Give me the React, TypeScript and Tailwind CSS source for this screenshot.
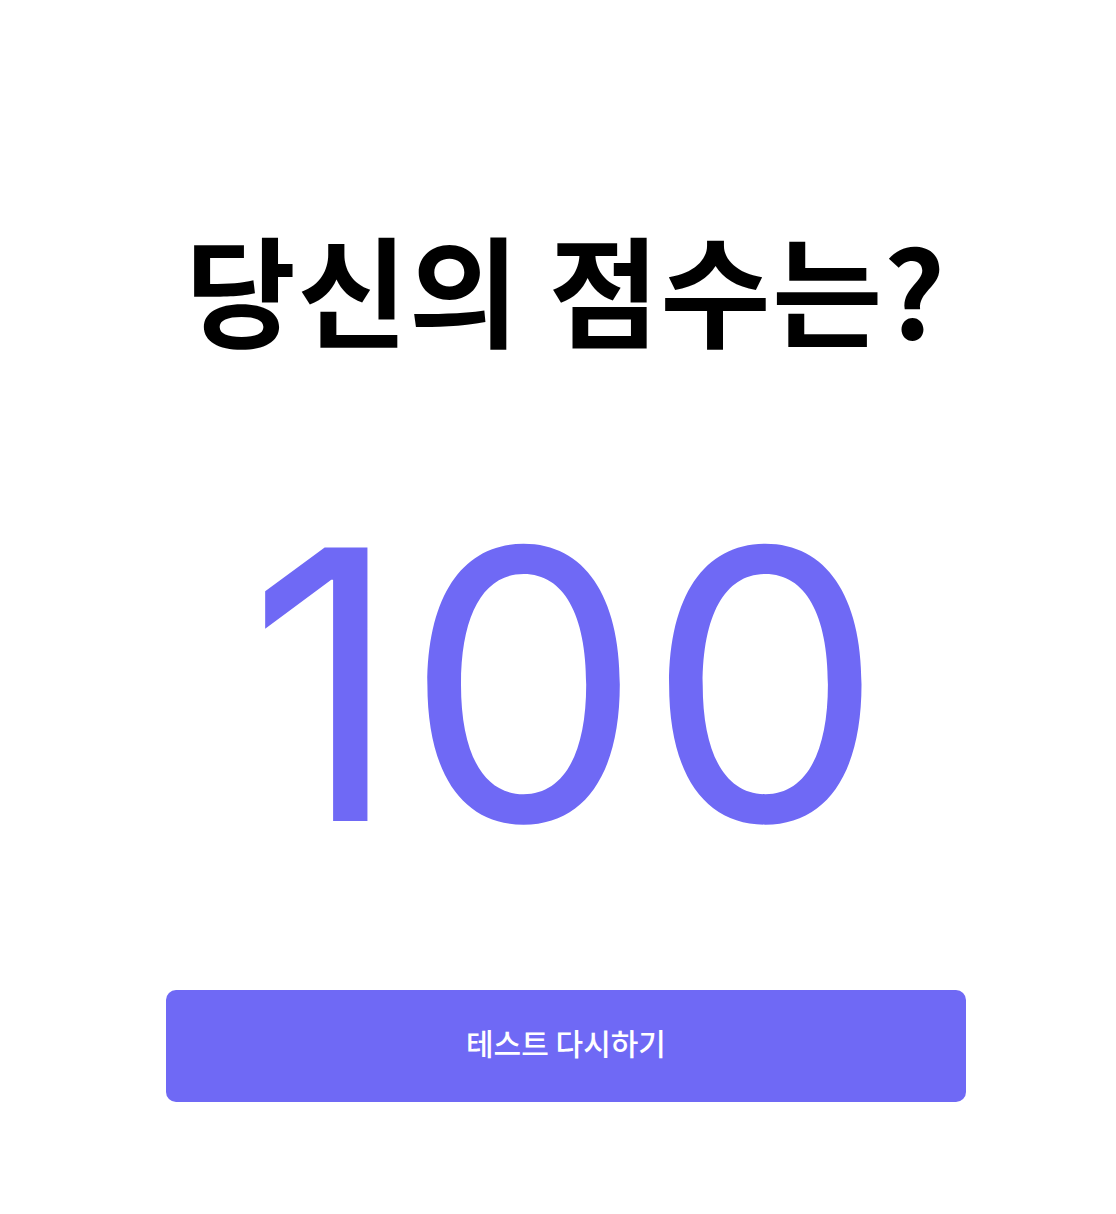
export default function App() {
  return (
    <div className="min-h-screen bg-white pl-4 flex flex-col items-center [font-family:'Noto_Sans_CJK_KR',sans-serif]">
      <h1 className="mt-[207px] text-[120px] leading-[160px] font-bold text-black tracking-[0.01em]">
        당신의 점수는?
      </h1>
      <div className="mt-[132px] pl-1 text-[376px] leading-[372px] text-[#6f69f5] [font-family:Inter,sans-serif] font-normal tracking-[0.012em]">
        100
      </div>
      <button
        type="button"
        className="mt-[119px] w-[800px] h-[112px] pb-2 rounded-[10px] bg-[#6f69f5] text-white text-[30px] font-medium"
      >
        테스트 다시하기
      </button>
    </div>
  )
}
